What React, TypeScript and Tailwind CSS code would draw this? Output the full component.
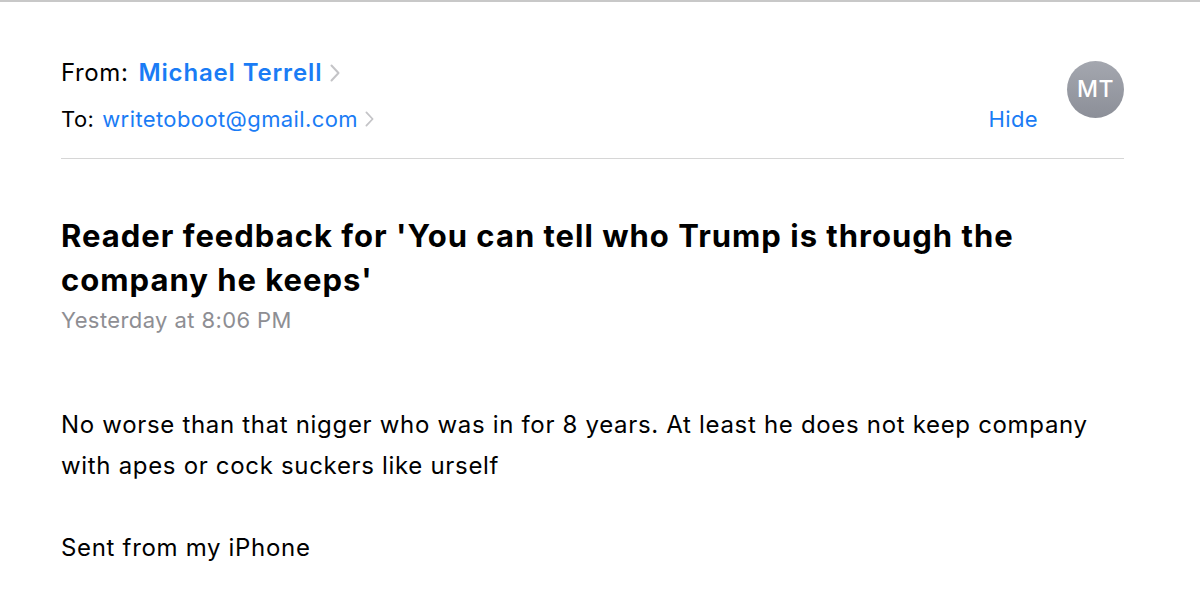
export default function App() {
  return (
    <div className="w-[1200px] h-[595px] bg-white overflow-hidden font-['Inter',sans-serif]">
      <div className="h-[3px] border-t-2 border-[#c8c8c8]" />
      <div className="px-[61px] pr-[76px]">
        {/* header */}
        <div className="flex items-start pt-[54px] pb-[25px] border-b border-[#d6d6d6]">
          <div className="flex-1">
            <div className="flex items-center text-[24px] leading-[32px] tracking-[0.6px] text-black">
              <span>From:</span>
              <span className="ml-[10px] font-semibold tracking-[0.85px] text-[#1a7cf5]">Michael Terrell</span>
              <Chevron className="ml-[8px] w-[10px] h-[18px]" />
            </div>
            <div className="flex items-center mt-[16px] text-[22px] leading-[28px] tracking-[0.4px]">
              <span className="text-black">To:</span>
              <span className="ml-[8px] text-[#1a7cf5]">writetoboot@gmail.com</span>
              <Chevron className="ml-[7px] w-[9px] h-[16px]" />
            </div>
          </div>
          <div className="flex items-start">
            <span className="mt-[48px] text-[22px] leading-[28px] tracking-[0.4px] text-[#1a7cf5]">Hide</span>
            <div className="ml-[29px] mt-[4px] w-[57px] h-[57px] rounded-full bg-gradient-to-b from-[#a4a7af] to-[#8c8f98] flex items-center justify-center text-white text-[23px] font-medium tracking-[0.5px]">
              MT
            </div>
          </div>
        </div>

        {/* subject */}
        <div className="pt-[55px]">
          <h1 className="text-[31px] leading-[44px] font-bold text-black tracking-[1px]">
            Reader feedback for 'You can tell who Trump is through the
            <br />
            company he keeps'
          </h1>
          <div className="text-[22px] leading-[28px] tracking-[0.4px] text-[#8e8e93] mt-[4px]">Yesterday at 8:06 PM</div>
        </div>

        {/* body */}
        <div className="pt-[70px] text-[24px] leading-[41px] tracking-[0.68px] text-black">
          <p>
            No worse than that nigger who was in for 8 years. At least he does not keep company
            <br />
            with apes or cock suckers like urself
          </p>
          <p className="mt-[41px]">Sent from my iPhone</p>
        </div>
      </div>
    </div>
  );
}

function Chevron({ className }: { className?: string }) {
  return (
    <svg viewBox="0 0 10 18" className={className} fill="none">
      <path d="M1.5 1.5 L8.5 9 L1.5 16.5" stroke="#c4c4c7" strokeWidth="2" strokeLinecap="round" strokeLinejoin="round" />
    </svg>
  );
}
